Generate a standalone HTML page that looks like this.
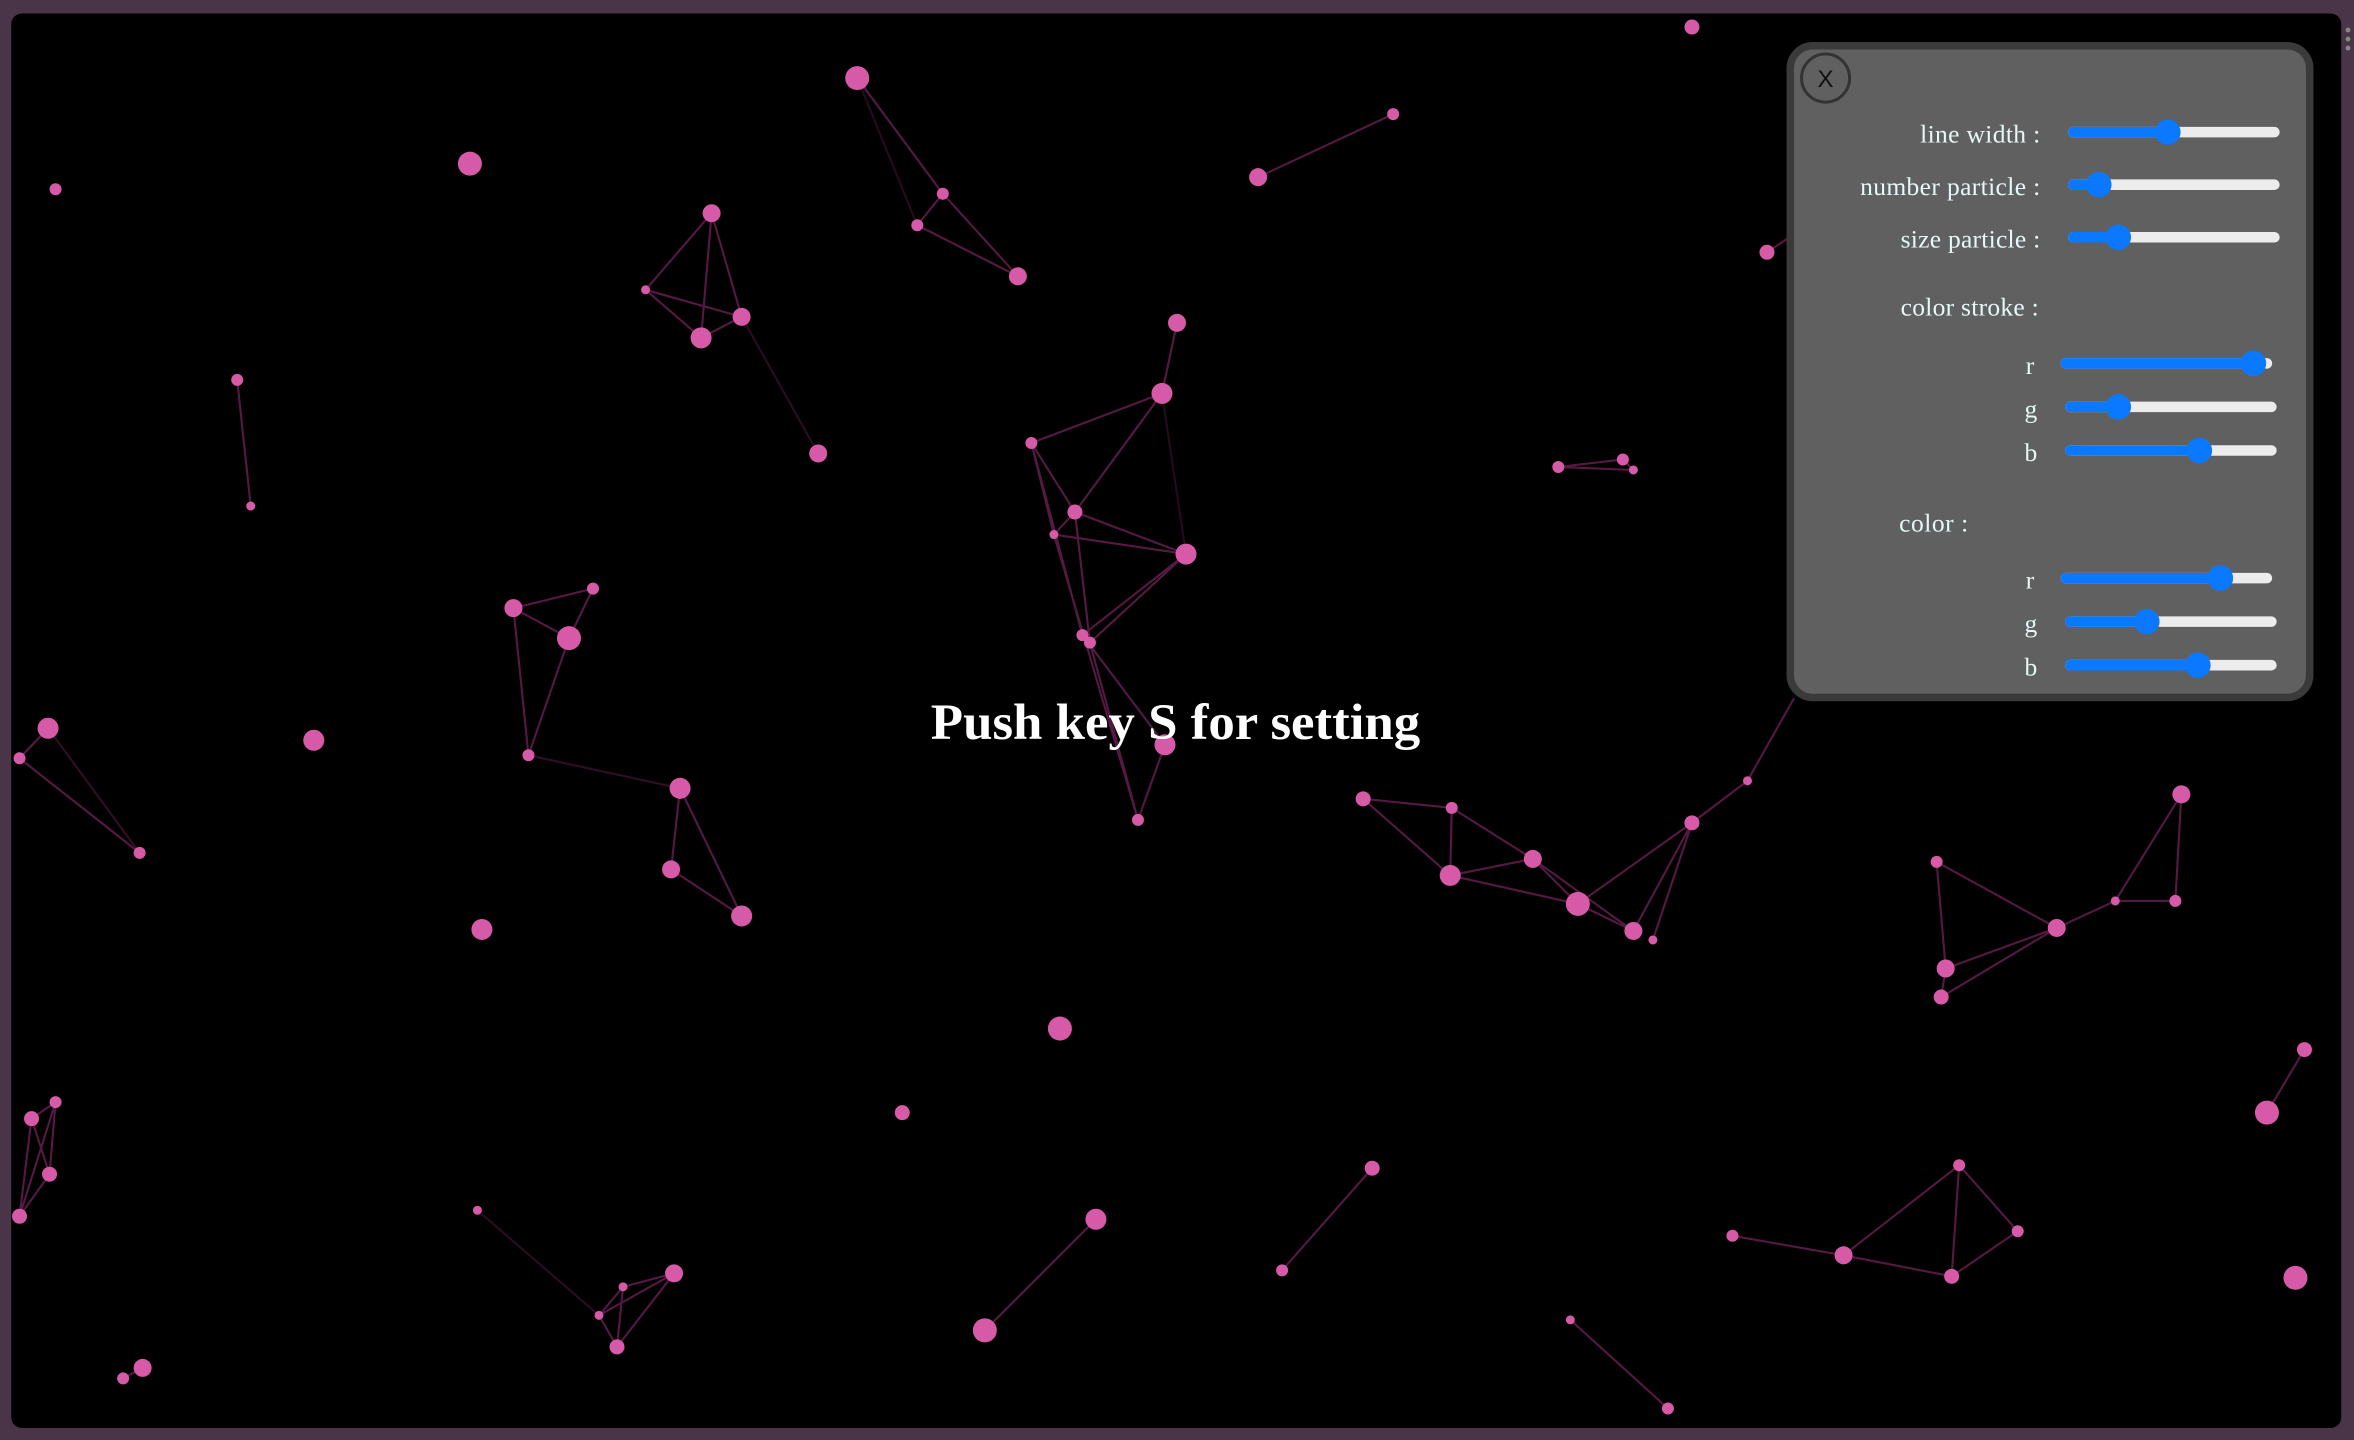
<!DOCTYPE html>
<html><head><meta charset="utf-8"><style>
html,body{margin:0;padding:0;background:#4a3548;overflow:hidden}
svg{display:block}
</style></head><body>
<svg width="2354" height="1440" viewBox="0 0 1568 959" preserveAspectRatio="none" xmlns="http://www.w3.org/2000/svg">
<rect x="0" y="0" width="1568" height="959" fill="#4a3548"/>
<rect x="7.5" y="9" width="1552" height="942" rx="7" fill="#000"/>
<circle cx="1564" cy="20" r="1.6" fill="#888"/><circle cx="1564" cy="26" r="1.6" fill="#888"/><circle cx="1564" cy="32" r="1.6" fill="#888"/>
<g stroke="#7a2460" stroke-width="1.4" stroke-opacity="0.7" fill="none">
<path d="M571 52L628 129M628 129L611 150M628 129L678 184M611 150L678 184"/>
<path d="M571 52L611 150M774 262L790 369" stroke-opacity="0.3"/>
<path d="M838 118L928 76"/>
<path d="M474 142L430 193M474 142L467 225M474 142L494 211M430 193L467 225M430 193L494 211M467 225L494 211"/>
<path d="M494 211L545 302" stroke-opacity="0.35"/>
<path d="M1177 168L1192 158"/>
<path d="M158 253L167 337"/>
<path d="M784 215L774 262M774 262L687 295M774 262L716 341M687 295L716 341M687 295L702 356M716 341L702 356M716 341L790 369M702 356L790 369M687 295L721 423M716 341L726 428M790 369L721 423M790 369L726 428M721 423L776 496M726 428L758 546M776 496L758 546M702 356L758 546"/>
<path d="M1038 311L1081 306M1038 311L1088 313M1081 306L1088 313"/>
<path d="M342 405L395 392M342 405L379 425M395 392L379 425M342 405L352 503M379 425L352 503"/>
<path d="M352 503L453 525M32 485L93 568" stroke-opacity="0.4"/>
<path d="M32 485L13 505M13 505L93 568"/>
<path d="M453 525L447 579M453 525L494 610M447 579L494 610"/>
<path d="M908 532L967 538M908 532L966 583M967 538L966 583M967 538L1021 572M966 583L1021 572M966 583L1051 602M1021 572L1051 602M1021 572L1088 620M1051 602L1088 620M1051 602L1127 548M1088 620L1127 548M1127 548L1101 626M1127 548L1164 520M1164 520L1195 465"/>
<path d="M1453 529L1409 600M1453 529L1449 600M1409 600L1449 600M1409 600L1370 618M1370 618L1290 574M1290 574L1296 645M1370 618L1296 645M1370 618L1293 664M1296 645L1293 664"/>
<path d="M1535 699L1510 741"/>
<path d="M21 745L37 734M21 745L33 782M37 734L33 782M21 745L13 810M37 734L13 810M33 782L13 810"/>
<path d="M318 806L399 876" stroke-opacity="0.35"/>
<path d="M914 778L854 846M730 812L656 886"/>
<path d="M415 857L449 848M415 857L399 876M415 857L411 897M449 848L399 876M449 848L411 897M399 876L411 897"/>
<path d="M1154 823L1228 836M1228 836L1305 776M1228 836L1300 850M1305 776L1300 850M1305 776L1344 820M1344 820L1300 850"/>
<path d="M1046 879L1111 938M95 911L82 918"/>
</g>
<g fill="#d65aa8">
<circle cx="1127" cy="18" r="5"/><circle cx="571" cy="52" r="8"/><circle cx="628" cy="129" r="4"/><circle cx="611" cy="150" r="4"/><circle cx="678" cy="184" r="6"/>
<circle cx="838" cy="118" r="6"/><circle cx="928" cy="76" r="4"/><circle cx="313" cy="109" r="8"/><circle cx="37" cy="126" r="4"/>
<circle cx="474" cy="142" r="6"/><circle cx="430" cy="193" r="3"/><circle cx="494" cy="211" r="6"/><circle cx="467" cy="225" r="7"/><circle cx="545" cy="302" r="6"/>
<circle cx="1177" cy="168" r="5"/><circle cx="158" cy="253" r="4"/><circle cx="167" cy="337" r="3"/>
<circle cx="784" cy="215" r="6"/><circle cx="774" cy="262" r="7"/><circle cx="687" cy="295" r="4"/><circle cx="716" cy="341" r="5"/><circle cx="702" cy="356" r="3"/><circle cx="790" cy="369" r="7"/><circle cx="721" cy="423" r="4"/><circle cx="726" cy="428" r="4"/><circle cx="776" cy="496" r="7"/><circle cx="758" cy="546" r="4"/>
<circle cx="1038" cy="311" r="4"/><circle cx="1081" cy="306" r="4"/><circle cx="1088" cy="313" r="3"/>
<circle cx="342" cy="405" r="6"/><circle cx="395" cy="392" r="4"/><circle cx="379" cy="425" r="8"/><circle cx="352" cy="503" r="4"/>
<circle cx="32" cy="485" r="7"/><circle cx="13" cy="505" r="4"/><circle cx="93" cy="568" r="4"/><circle cx="209" cy="493" r="7"/>
<circle cx="453" cy="525" r="7"/><circle cx="447" cy="579" r="6"/><circle cx="494" cy="610" r="7"/><circle cx="321" cy="619" r="7"/>
<circle cx="908" cy="532" r="5"/><circle cx="967" cy="538" r="4"/><circle cx="966" cy="583" r="7"/><circle cx="1021" cy="572" r="6"/><circle cx="1051" cy="602" r="8"/><circle cx="1088" cy="620" r="6"/><circle cx="1101" cy="626" r="3"/><circle cx="1127" cy="548" r="5"/><circle cx="1164" cy="520" r="3"/>
<circle cx="1453" cy="529" r="6"/><circle cx="1290" cy="574" r="4"/><circle cx="1409" cy="600" r="3"/><circle cx="1449" cy="600" r="4"/><circle cx="1370" cy="618" r="6"/><circle cx="1296" cy="645" r="6"/><circle cx="1293" cy="664" r="5"/>
<circle cx="706" cy="685" r="8"/><circle cx="601" cy="741" r="5"/><circle cx="1535" cy="699" r="5"/><circle cx="1510" cy="741" r="8"/>
<circle cx="21" cy="745" r="5"/><circle cx="37" cy="734" r="4"/><circle cx="33" cy="782" r="5"/><circle cx="13" cy="810" r="5"/>
<circle cx="318" cy="806" r="3"/><circle cx="914" cy="778" r="5"/><circle cx="854" cy="846" r="4"/><circle cx="730" cy="812" r="7"/><circle cx="656" cy="886" r="8"/>
<circle cx="415" cy="857" r="3"/><circle cx="449" cy="848" r="6"/><circle cx="399" cy="876" r="3"/><circle cx="411" cy="897" r="5"/>
<circle cx="1154" cy="823" r="4"/><circle cx="1228" cy="836" r="6"/><circle cx="1305" cy="776" r="4"/><circle cx="1344" cy="820" r="4"/><circle cx="1300" cy="850" r="5"/>
<circle cx="1529" cy="851" r="8"/><circle cx="1046" cy="879" r="3"/><circle cx="1111" cy="938" r="4"/><circle cx="95" cy="911" r="6"/><circle cx="82" cy="918" r="4"/>
</g>
<text x="620" y="492" font-family="Liberation Serif, serif" font-weight="bold" font-size="34" fill="#fff" textLength="326" lengthAdjust="spacingAndGlyphs">Push key S for setting</text>
<rect x="1192.5" y="30.5" width="346" height="434" rx="15" fill="#606060" stroke="#3a3a3a" stroke-width="5"/>
<circle cx="1216" cy="52" r="16" fill="none" stroke="#333" stroke-width="2"/>
<text x="1216" y="58" text-anchor="middle" font-family="Liberation Sans, sans-serif" font-size="16" fill="#111">X</text>
<g font-family="Liberation Serif, serif" font-size="17" fill="#e6f7f7" text-anchor="end">
<text x="1359" y="95" textLength="80">line width :</text>
<text x="1359" y="130" textLength="120">number particle :</text>
<text x="1359" y="165" textLength="93">size particle :</text>
<text x="1358" y="210" textLength="92">color stroke :</text>
<text x="1355" y="249">r</text><text x="1357" y="278">g</text><text x="1357" y="307">b</text>
<text x="1311" y="354" textLength="46">color :</text>
<text x="1355" y="392">r</text><text x="1357" y="421">g</text><text x="1357" y="450">b</text>
</g>
<g stroke-linecap="round" stroke-width="7">
<g stroke="#ececec"><path d="M1381 88H1515M1381 123H1515M1381 158H1515M1376 242H1510M1379 271H1513M1379 300H1513M1376 385H1510M1379 414H1513M1379 443H1513"/></g>
<g stroke="#0a78ff"><path d="M1381 88H1444M1381 123H1398M1381 158H1411M1376 242H1501M1379 271H1411M1379 300H1465M1376 385H1479M1379 414H1430M1379 443H1464"/></g>
</g>
<g fill="#0a78ff">
<circle cx="1444" cy="88" r="8.5"/><circle cx="1398" cy="123" r="8.5"/><circle cx="1411" cy="158" r="8.5"/>
<circle cx="1501" cy="242" r="8.5"/><circle cx="1411" cy="271" r="8.5"/><circle cx="1465" cy="300" r="8.5"/>
<circle cx="1479" cy="385" r="8.5"/><circle cx="1430" cy="414" r="8.5"/><circle cx="1464" cy="443" r="8.5"/>
</g>
</svg>
</body></html>
